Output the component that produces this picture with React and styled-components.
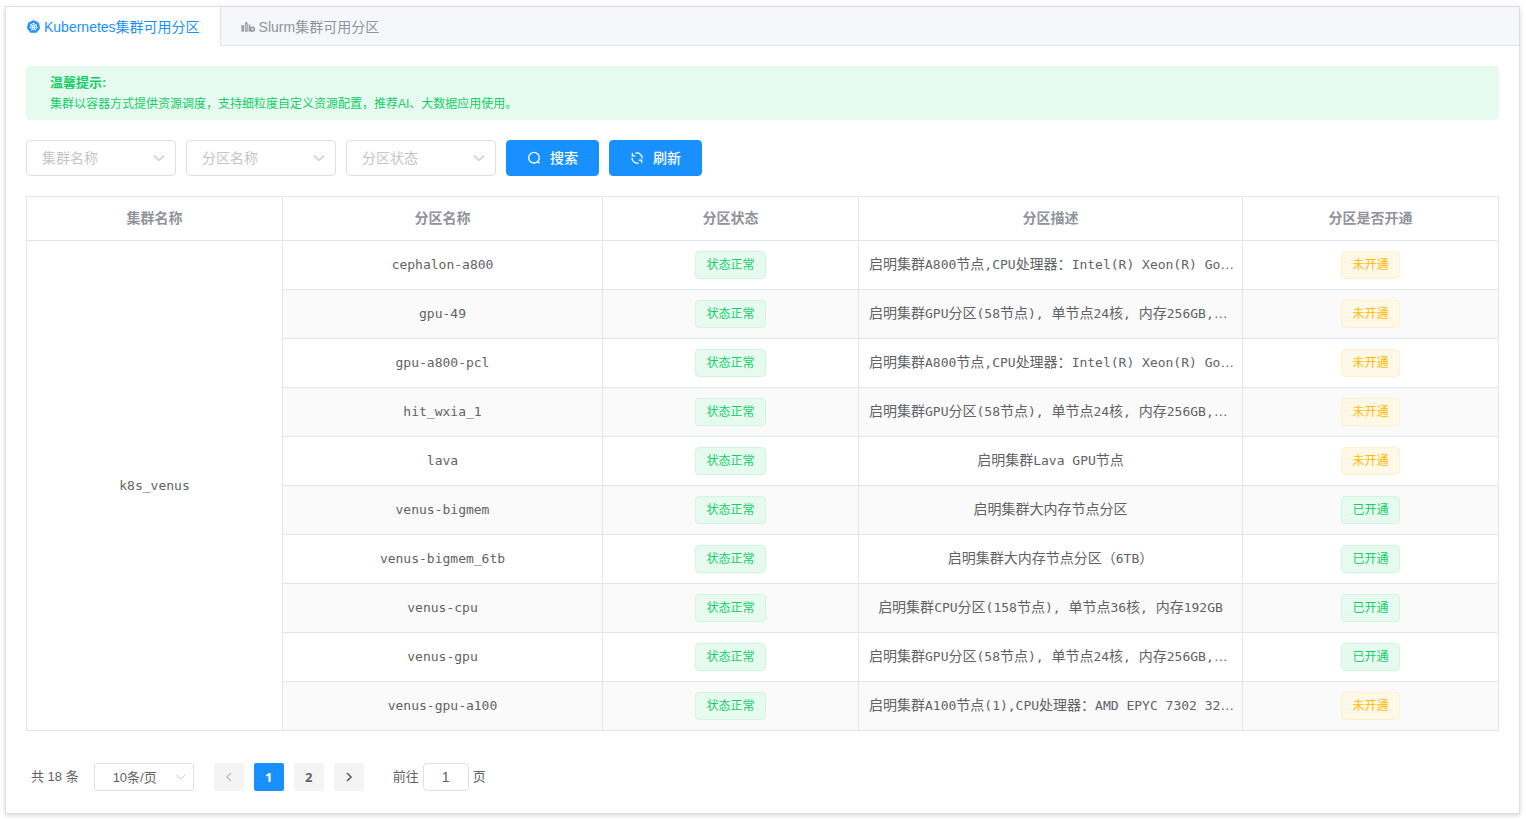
import React, { useState } from 'react'
import styled, { createGlobalStyle } from 'styled-components'
import { SiKubernetes } from 'react-icons/si'

const PARTITIONS = [
    { name: 'cephalon-a800', desc: '启明集群A800节点,CPU处理器：Intel(R) Xeon(R) Go…', opened: false },
    { name: 'gpu-49', desc: '启明集群GPU分区(58节点), 单节点24核, 内存256GB,…', opened: false },
    { name: 'gpu-a800-pcl', desc: '启明集群A800节点,CPU处理器：Intel(R) Xeon(R) Go…', opened: false },
    { name: 'hit_wxia_1', desc: '启明集群GPU分区(58节点), 单节点24核, 内存256GB,…', opened: false },
    { name: 'lava', desc: '启明集群Lava GPU节点', opened: false },
    { name: 'venus-bigmem', desc: '启明集群大内存节点分区', opened: true },
    { name: 'venus-bigmem_6tb', desc: '启明集群大内存节点分区（6TB）', opened: true },
    { name: 'venus-cpu', desc: '启明集群CPU分区(158节点), 单节点36核, 内存192GB', opened: true },
    { name: 'venus-gpu', desc: '启明集群GPU分区(58节点), 单节点24核, 内存256GB,…', opened: true },
    { name: 'venus-gpu-a100', desc: '启明集群A100节点(1),CPU处理器：AMD EPYC 7302 32…', opened: false },
];

const FILTERS = ['集群名称', '分区名称', '分区状态'];
const COLUMNS = ['集群名称', '分区名称', '分区状态', '分区描述', '分区是否开通'];

function Chevron({ size = 14 }) {
    return (
        <svg width={size} height={size} viewBox="0 0 14 14" fill="none" stroke="currentColor" strokeWidth="1.1">
            <path d="M2 4.5l5 5 5-5" />
        </svg>
    );
}

function ClusterIcon() {
    return (
        <svg width="14" height="14" viewBox="0 0 14 14" fill="currentColor">
            <path opacity=".85" d="M0.4 5h2.6v6.8h-2.6zM3.8 3.2l1.5-1.6 1.5 1.6v8.6h-3zM7.6 4.6h1.8v7.2h-1.8z" />
            <path d="M4.6 5h1.4M4.6 7h1.4M4.6 9h1.4" stroke="#f5f7fa" strokeWidth=".6" />
            <circle cx="11.5" cy="9.2" r="1.9" fill="none" stroke="currentColor" strokeWidth="1.5" />
        </svg>
    );
}

function SearchIcon() {
    return (
        <svg width="14" height="14" viewBox="0 0 14 14" fill="none" stroke="currentColor" strokeWidth="1.3">
            <circle cx="7" cy="6.7" r="5.3" />
            <path d="M10.6 10.4l2 2" />
        </svg>
    );
}

function RefreshIcon() {
    return (
        <svg width="14" height="14" viewBox="0 0 14 14" fill="none" stroke="currentColor" strokeWidth="1.3">
            <path d="M5.4 2.2A5 5 0 0 1 12 7.2M8.6 11.8A5 5 0 0 1 2 6.8" />
            <path d="M5.2 4.8H2.4V2M8.8 9.2h2.8V12" />
        </svg>
    );
}

// latin runs are set in monospace, a step smaller than the chinese around them
function MixedText({ text }) {
    return text.split(/([\x20-\x7e]+)/).map((part, i) => (
        i % 2 ? <Mono key={i}>{part}</Mono> : part
    ));
}

function App() {
    const [tab, setTab] = useState('k8s');
    const [page, setPage] = useState(1);

  return (
    <>
        <GlobalStyle />
        <Card>
            <TabBar role="tablist">
                <Tab role="tab" aria-selected={tab === 'k8s'} $active={tab === 'k8s'} onClick={() => setTab('k8s')}>
                    <TabIcon><SiKubernetes size={13} /></TabIcon>Kubernetes集群可用分区
                </Tab>
                <Tab role="tab" aria-selected={tab === 'slurm'} $active={tab === 'slurm'} onClick={() => setTab('slurm')}>
                    <TabIcon><ClusterIcon /></TabIcon>Slurm集群可用分区
                </Tab>
            </TabBar>
            <Content>
                <Notice>
                    <strong>温馨提示:</strong>
                    <p>集群以容器方式提供资源调度，支持细粒度自定义资源配置，推荐AI、大数据应用使用。</p>
                </Notice>
                <Filters>
                    {FILTERS.map(label => (
                        <FilterSelect key={label}>
                            <select aria-label={label} defaultValue="">
                                <option value="">{label}</option>
                            </select>
                            <Chevron />
                        </FilterSelect>
                    ))}
                    <Button type="button"><SearchIcon />搜索</Button>
                    <Button type="button"><RefreshIcon />刷新</Button>
                </Filters>
                <Table>
                    <colgroup>
                        <Col $width={200} />
                        <Col $width={250} />
                        <Col $width={200} />
                        <Col $width={300} />
                        <Col $width={200} />
                    </colgroup>
                    <thead>
                        <tr>
                            {COLUMNS.map(title => <HeadCell key={title} scope="col">{title}</HeadCell>)}
                        </tr>
                    </thead>
                    <tbody>
                        {PARTITIONS.map((row, i) => (
                            <Row key={row.name}>
                                {i === 0 && (
                                    <ClusterCell rowSpan={PARTITIONS.length}><Mono>k8s_venus</Mono></ClusterCell>
                                )}
                                <TextCell><Mono>{row.name}</Mono></TextCell>
                                <Cell><Tag>状态正常</Tag></Cell>
                                <TextCell $clipped={row.desc.endsWith('…')}><MixedText text={row.desc} /></TextCell>
                                <Cell>
                                    <Tag $warning={!row.opened}>{row.opened ? '已开通' : '未开通'}</Tag>
                                </Cell>
                            </Row>
                        ))}
                    </tbody>
                </Table>
                <Pagination aria-label="分页">
                    <Total>共 18 条</Total>
                    <SizeSelect>
                        <select aria-label="每页条数" defaultValue="10">
                            <option value="10">10条/页</option>
                        </select>
                        <Chevron size={12} />
                    </SizeSelect>
                    <Pager>
                        <PageButton type="button" aria-label="上一页" disabled={page === 1} onClick={() => setPage(1)}>
                            <svg width="12" height="12" viewBox="0 0 12 12"><path d="M8 2L4 6l4 4" /></svg>
                        </PageButton>
                        {[1, 2].map(n => (
                            <PageButton key={n} type="button" $active={page === n} onClick={() => setPage(n)}>{n}</PageButton>
                        ))}
                        <PageButton type="button" aria-label="下一页" disabled={page === 2} onClick={() => setPage(2)}>
                            <svg width="12" height="12" viewBox="0 0 12 12"><path d="M4 2l4 4-4 4" /></svg>
                        </PageButton>
                    </Pager>
                    <Jumper>
                        <span>前往</span>
                        <input type="text" value={page} readOnly />
                        <span>页</span>
                    </Jumper>
                </Pagination>
            </Content>
        </Card>
    </>
  )
}

export default App

const GlobalStyle = createGlobalStyle`
    * {
        box-sizing: border-box;
    }
    body {
        margin: 0;
        background: #fff;
        color: #606266;
        font-family: "Liberation Sans", "Noto Sans CJK SC", sans-serif;
        font-size: 14px;
    }
    button, input, select {
        font-family: inherit;
    }
    svg {
        flex: none;
    }
`;

const Card = styled.main`
    margin: 6px 6px 6px 5px;
    border: 1px solid #dcdfe6;
    background: #fff;
    box-shadow: 0 2px 4px rgba(0, 0, 0, .12), 0 0 6px rgba(0, 0, 0, .04);
`;

const TabBar = styled.div`
    display: flex;
    height: 39px;
    background: #f5f7fa;
    border-bottom: 1px solid #dfe4ed;
`;

const Tab = styled.button`
    display: flex;
    align-items: center;
    gap: 4px;
    height: 39px;
    padding: 0 20px;
    border: 0;
    border-right: 1px solid ${props => props.$active ? '#dcdfe6' : 'transparent'};
    background: ${props => props.$active ? '#fff' : 'transparent'};
    color: ${props => props.$active ? '#1890ff' : '#909399'};
    font-size: 14px;
    line-height: 38px;
    cursor: pointer;
`;

const TabIcon = styled.span`
    display: flex;
    align-items: center;
    justify-content: center;
    width: 14px;
    height: 14px;
`;

const Content = styled.div`
    padding: 20px;
`;

const Notice = styled.div`
    padding: 8px 24px;
    border-radius: 4px;
    background: #e7faf0;
    color: #13ce66;
    > strong {
        display: block;
        font-size: 13px;
        line-height: 18px;
    }
    > p {
        margin: 4px 0 0;
        font-size: 12px;
        line-height: 16px;
    }
`;

const Filters = styled.div`
    display: flex;
    gap: 10px;
    margin: 20px 0;
`;

const SelectBox = styled.div`
    position: relative;
    color: #c0c4cc;
    > select {
        width: 100%;
        border: 1px solid #dcdfe6;
        border-radius: 4px;
        background: #fff;
        appearance: none;
    }
    > svg {
        position: absolute;
        top: 50%;
        transform: translateY(-50%);
        pointer-events: none;
    }
`;

const FilterSelect = styled(SelectBox)`
    width: 150px;
    > select {
        height: 36px;
        padding: 0 30px 0 15px;
        color: #c0c4cc;
        font-size: 14px;
    }
    > svg {
        right: 10px;
    }
`;

const Button = styled.button`
    display: flex;
    align-items: center;
    gap: 9px;
    height: 36px;
    padding: 0 20px;
    border: 1px solid #1890ff;
    border-radius: 4px;
    background: #1890ff;
    color: #fff;
    font-size: 14px;
    font-weight: 500;
    line-height: 32px;
    cursor: pointer;
`;

const Table = styled.table`
    width: 100%;
    table-layout: fixed;
    border-collapse: separate;
    border-spacing: 0;
    border: solid #dfe6ec;
    border-width: 1px 0 0 1px;
`;

const Col = styled.col`
    width: ${props => props.$width}px;
`;

const HeadCell = styled.th`
    height: 44px;
    padding: 0 10px 2px;
    border: solid #dfe6ec;
    border-width: 0 1px 1px 0;
    color: #909399;
    font-weight: bold;
    line-height: 20px;
`;

const Cell = styled.td`
    height: 49px;
    padding: 0 10px;
    border: solid #dfe6ec;
    border-width: 0 1px 1px 0;
    line-height: 20px;
    text-align: ${props => props.$clipped ? 'left' : 'center'};
    white-space: nowrap;
    overflow: hidden;
`;

const TextCell = styled(Cell)`
    padding-bottom: 2px;
`;

const ClusterCell = styled(Cell)`
    background: #fff;
`;

const Row = styled.tr`
    &:nth-child(even) {
        background: #fafafa;
    }
`;

const Mono = styled.span`
    font-family: "DejaVu Sans Mono", monospace;
    font-size: 13px;
`;

const Tag = styled.span`
    display: inline-block;
    height: 28px;
    padding: 0 10px;
    border: 1px solid ${props => props.$warning ? '#fff1cc' : '#d0f5e0'};
    border-radius: 4px;
    background: ${props => props.$warning ? '#fff8e6' : '#e7faf0'};
    color: ${props => props.$warning ? '#ffba00' : '#13ce66'};
    font-size: 12px;
    line-height: 26px;
    vertical-align: middle;
`;

const Pagination = styled.nav`
    display: flex;
    align-items: center;
    margin-top: 30px;
    padding: 2px 5px;
    font-size: 13px;
    line-height: 28px;
`;

const Total = styled.span`
    margin-right: 15px;
`;

const SizeSelect = styled(SelectBox)`
    width: 100px;
    margin-right: 20px;
    > select {
        display: block;
        height: 28px;
        padding: 0 26px 0 8px;
        border-radius: 3px;
        color: #606266;
        font-size: 13px;
        text-align: center;
        text-align-last: center;
    }
    > svg {
        right: 7px;
    }
`;

const Pager = styled.div`
    display: flex;
    gap: 10px;
`;

const PageButton = styled.button`
    display: flex;
    align-items: center;
    justify-content: center;
    width: 30px;
    height: 28px;
    padding: 0;
    border: 0;
    border-radius: 2px;
    background: ${props => props.$active ? '#1890ff' : '#f4f4f5'};
    color: ${props => props.$active ? '#fff' : '#606266'};
    font-family: "Open Sans", sans-serif;
    font-size: 13px;
    font-weight: bold;
    line-height: 26px;
    cursor: pointer;
    &:disabled {
        color: #c0c4cc;
    }
    > svg {
        fill: none;
        stroke: currentColor;
        stroke-width: 1.7;
    }
`;

const Jumper = styled.label`
    display: flex;
    gap: 4px;
    margin-left: 29px;
    > input {
        width: 46px;
        height: 28px;
        padding: 0 3px;
        border: 1px solid #dcdfe6;
        border-radius: 4px;
        color: #606266;
        font-size: 14px;
        text-align: center;
    }
`;
